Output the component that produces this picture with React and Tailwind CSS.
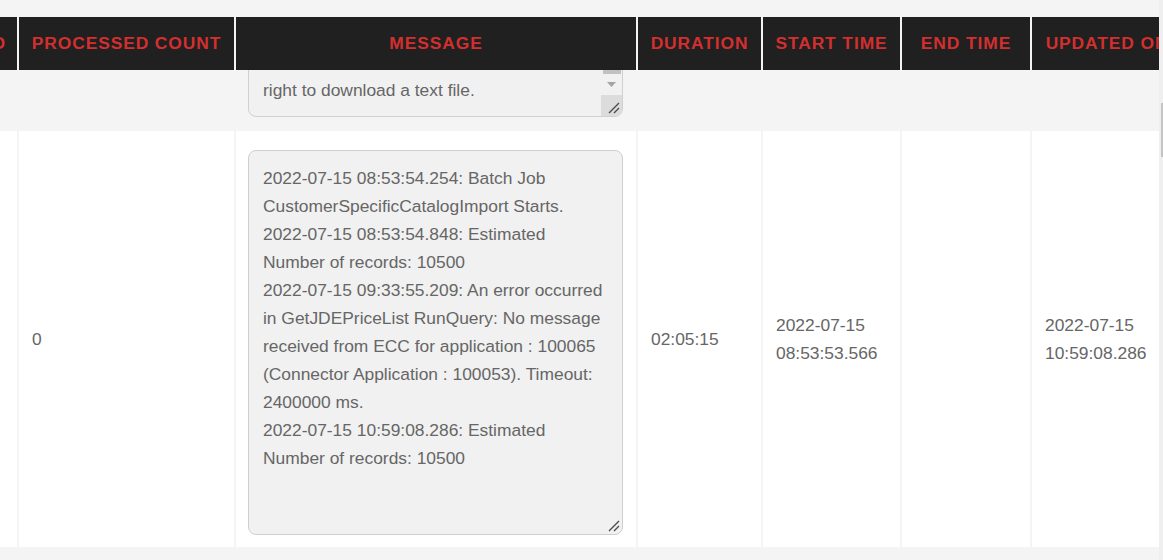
import React from 'react'

const headers = ['Job ID', 'Processed Count', 'Message', 'Duration', 'Start Time', 'End Time', 'Updated On']

const logLines = [
  '2022-07-15 08:53:54.254: Batch Job',
  'CustomerSpecificCatalogImport Starts.',
  '2022-07-15 08:53:54.848: Estimated',
  'Number of records: 10500',
  '2022-07-15 09:33:55.209: An error occurred',
  'in GetJDEPriceList RunQuery: No message',
  'received from ECC for application : 100065',
  '(Connector Application : 100053). Timeout:',
  '2400000 ms.',
  '2022-07-15 10:59:08.286: Estimated',
  'Number of records: 10500',
]

function ResizeGrip() {
  return (
    <svg width="12" height="12" viewBox="0 0 12 12" className="absolute right-[2px] bottom-[2px]">
      <path d="M1 11L11 1M6 11L11 6" stroke="#4b4b4b" strokeWidth="1.4" fill="none" />
    </svg>
  )
}

export default function App() {
  return (
    <div className="flex h-[560px] w-full overflow-hidden bg-[#f4f4f4] font-['Liberation_Sans',Arial,sans-serif]">
      <div className="min-w-0 flex-1 overflow-hidden pt-[17px]">
        <div className="ml-[-83px] grid w-max grid-cols-[100px_215px_400px_123px_137px_128px_150px] gap-x-[2px]">
          {/* Header */}
          {headers.map((h, i) => (
            <div
              key={h}
              className={`flex h-[53px] items-center bg-[#202020] text-[17.4px] font-bold uppercase tracking-[0.9px] text-[#d32f2f] whitespace-nowrap ${i === 0 ? 'justify-end pr-[11px]' : 'justify-center'}`}
            >
              {h}
            </div>
          ))}

          {/* Previous row, scrolled under the header */}
          <div className="h-[61px]" />
          <div className="h-[61px]" />
          <div className="flex h-[61px] flex-col justify-end overflow-hidden pb-[14px] pl-[12px]">
            <div className="flex h-[100px] w-[375px] shrink-0 rounded-b-[8px] border border-[#d0d0d0] bg-[#f1f1f1]">
              <div className="flex flex-1 flex-col justify-end pb-[12px] pl-[14px] text-[17.4px] leading-[28px] text-[#666]">
                <div>right to download a text file.</div>
              </div>
              <div className="flex w-[21px] flex-col justify-end">
                <div className="ml-[2px] mr-[1px] h-[40px] bg-[#c1c1c1]" />
                <div className="flex h-[21px] items-center justify-center">
                  <svg width="9" height="5" viewBox="0 0 9 5">
                    <path d="M0 0H9L4.5 5Z" fill="#a3a3a3" />
                  </svg>
                </div>
                <div className="relative h-[21px] rounded-br-[7px] bg-[#dcdcdc]">
                  <ResizeGrip />
                </div>
              </div>
            </div>
          </div>
          <div className="h-[61px]" />
          <div className="h-[61px]" />
          <div className="h-[61px]" />
          <div className="h-[61px]" />

          {/* Current row */}
          <div className="bg-white" />
          <div className="flex items-center bg-white pl-[13px] text-[17.4px] leading-[28px] text-[#666]">0</div>
          <div className="bg-white pb-[12px] pl-[12px] pt-[19px]">
            <div className="relative h-[385px] w-[375px] rounded-[8px] border border-[#cfcfcf] bg-[#f1f1f1] pl-[14px] pt-[13px] text-[17.4px] leading-[28px] text-[#666]">
              {logLines.map((l, i) => (
                <div key={i} className="whitespace-nowrap">{l}</div>
              ))}
              <ResizeGrip />
            </div>
          </div>
          <div className="flex items-center bg-white pl-[13px] text-[17.4px] leading-[28px] text-[#666]">02:05:15</div>
          <div className="flex items-center bg-white px-[13px] text-[17.4px] leading-[28px] text-[#666]">
            <div>2022-07-15<br />08:53:53.566</div>
          </div>
          <div className="bg-white" />
          <div className="flex items-center bg-white px-[13px] text-[17.4px] leading-[28px] text-[#666]">
            <div>2022-07-15<br />10:59:08.286</div>
          </div>
        </div>
      </div>

      {/* page scrollbar */}
      <div className="w-[4px] shrink-0 bg-[#efefef]">
        <div className="ml-[2px] mt-[103px] h-[54px] w-[2px] bg-[#c4c4c4]" />
      </div>
    </div>
  )
}
